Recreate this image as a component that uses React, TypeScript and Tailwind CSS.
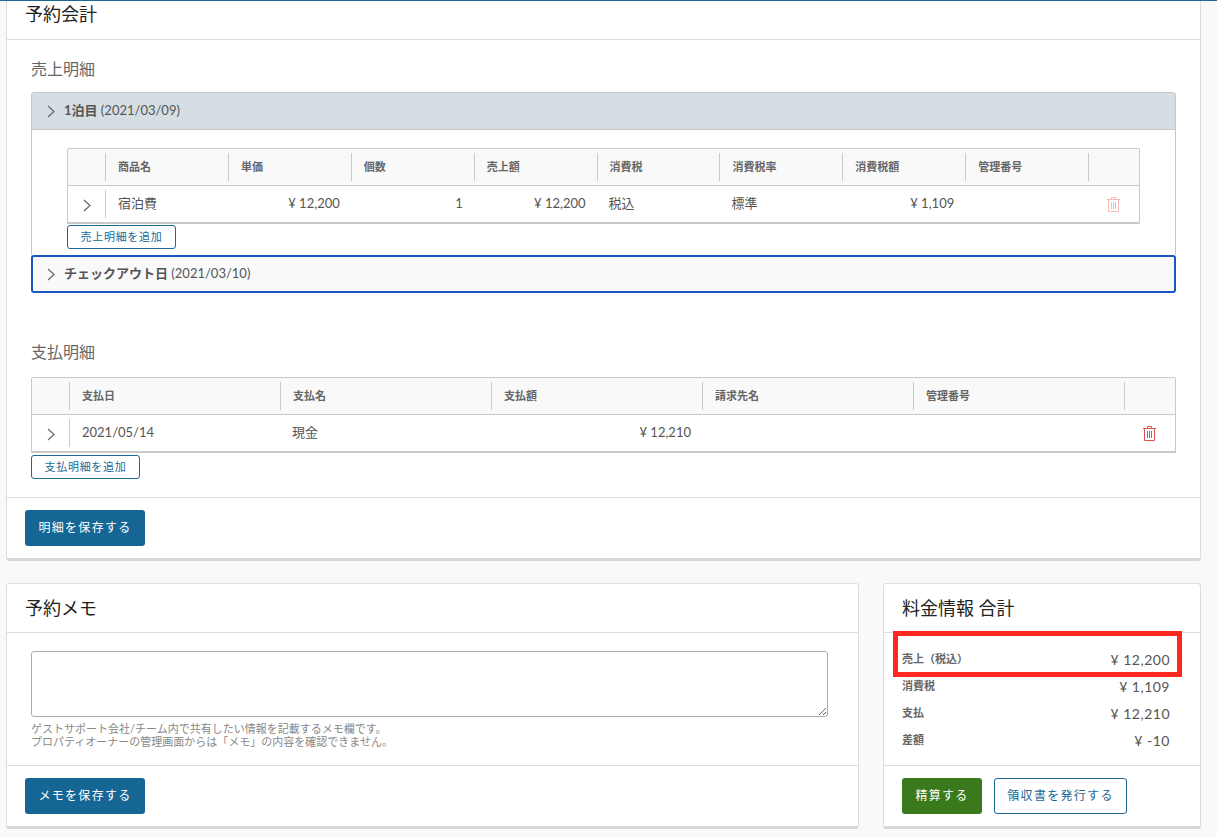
import React from 'react';

const Chevron: React.FC = () => (
  <svg width="8" height="13" viewBox="0 0 8 13" fill="none" stroke="#666" strokeWidth="1.2">
    <path d="M1 1l6 5.5L1 12" />
  </svg>
);

const Trash: React.FC<{ className?: string }> = ({ className }) => (
  <svg width="13" height="15" viewBox="0 0 13 15" fill="none" stroke="currentColor" strokeWidth="1" className={className}>
    <path d="M0 2.5h13M4.5 2.5v-2h4v2M1.5 2.5v12h10v-12M4.5 5v7M6.5 5v7M8.5 5v7" />
  </svg>
);

const HeadCell: React.FC<{ label?: string }> = ({ label }) => (
  <div className="flex items-center h-[28px] border-l border-[#c9c9c9] pl-3 text-[11px] font-bold text-[#666] self-center">{label}</div>
);

const Cell: React.FC<{ children?: React.ReactNode; right?: boolean }> = ({ children, right }) => (
  <div className={`flex items-center text-[13px] text-[#555] ${right ? 'justify-end pr-[11px]' : 'pl-3'}`}>{children}</div>
);

const OutlineBtn: React.FC<{ label: string }> = ({ label }) => (
  <button className="block w-[109px] h-[24px] rounded-[3px] border border-[#1b6a96] bg-white text-[11px] tracking-[0.7px] text-[#1b6a96]">{label}</button>
);

const SolidBtn: React.FC<{ label: string }> = ({ label }) => (
  <button className="w-[120px] h-[36px] rounded-[3px] bg-[#156695] text-[12px] tracking-[1.3px] text-white">{label}</button>
);

const salesHead = ['商品名', '単価', '個数', '売上額', '消費税', '消費税率', '消費税額', '管理番号', ''];
const payHead = ['支払日', '支払名', '支払額', '請求先名', '管理番号', ''];

const totals = [
  { label: '売上（税込）', value: '¥ 12,200' },
  { label: '消費税', value: '¥ 1,109' },
  { label: '支払', value: '¥ 12,210' },
  { label: '差額', value: '¥ -10' },
];

export default function App() {
  return (
    <div className="relative h-[837px] overflow-hidden bg-[#f9f9f9] border-t border-[#1b6a96] font-['Lato','Noto_Sans_CJK_JP',sans-serif] text-[#555]">
      <div className="mx-[6px] w-[1195px] h-[560px] bg-white border-x border-[#ddd] border-b-[3px] border-b-[#d8d8d8] rounded-b-[3px] flex flex-col">
        <div className="h-[39px] shrink-0 border-b border-[#ddd] pl-[18px] text-[18px] leading-[26px] text-[#222]">予約会計</div>

        <div className="flex-1 px-[24px] pt-[17px]">
          <h2 className="text-[16px] leading-[24px] text-[#666]">売上明細</h2>
          <div className="mt-[11px] w-[1145px] h-[163px] border-x border-[#c4c8c8] rounded-t-[3px]">
            <div className="h-[38px] flex items-center gap-[9px] pl-[15px] bg-[#d4dee3] border-y border-[#c4c8c8] rounded-t-[3px] text-[13px] text-[#555]">
              <Chevron />
              <span><b>1泊目</b> (2021/03/09)</span>
            </div>
            <div className="ml-[35px] mt-[18px] w-[1073px] border border-[#c9c9c9] border-b-2 rounded-t-[2px]">
              <div className="grid grid-cols-[37px_repeat(8,122.9px)_1fr] h-[37px] bg-[#f9f9f9] border-b border-[#c9c9c9]">
                <div />
                {salesHead.map((h, i) => (
                  <HeadCell key={i} label={h} />
                ))}
              </div>
              <div className="grid grid-cols-[37px_repeat(8,122.9px)_1fr] h-[36px]">
                <div className="flex items-center justify-center pt-[2px]"><Chevron /></div>
                <div className="flex items-center border-l border-[#c9c9c9] h-[28px] self-center pl-3 text-[13px]">宿泊費</div>
                <Cell right>¥ 12,200</Cell>
                <Cell right>1</Cell>
                <Cell right>¥ 12,200</Cell>
                <Cell>税込</Cell>
                <Cell>標準</Cell>
                <Cell right>¥ 1,109</Cell>
                <Cell />
                <div className="flex items-center justify-center">
                  <Trash className="text-[#f7b9b9]" />
                </div>
              </div>
            </div>
            <div className="ml-[35px] mt-[1px]"><OutlineBtn label="売上明細を追加" /></div>
          </div>
          <div className="w-[1145px] h-[38px] flex items-center gap-[9px] pl-[14px] bg-[#f9f9f9] border-2 border-[#1a56bf] rounded-[3px] text-[13px] text-[#555]">
            <Chevron />
            <span><b>チェックアウト日</b> (2021/03/10)</span>
          </div>

          <h2 className="mt-[47px] text-[16px] leading-[24px] text-[#666]">支払明細</h2>
          <div className="mt-[13px] w-[1145px] border border-[#c9c9c9] border-b-2 rounded-t-[2px]">
            <div className="grid grid-cols-[37px_repeat(5,211px)_1fr] h-[37px] bg-[#f9f9f9] border-b border-[#c9c9c9]">
              <div />
              {payHead.map((h, i) => (
                <HeadCell key={i} label={h} />
              ))}
            </div>
            <div className="grid grid-cols-[37px_repeat(5,211px)_1fr] h-[36px]">
              <div className="flex items-center justify-center pt-[2px]"><Chevron /></div>
              <div className="flex items-center border-l border-[#c9c9c9] h-[28px] self-center pl-3 text-[13px]">2021/05/14</div>
              <Cell>現金</Cell>
              <Cell right>¥ 12,210</Cell>
              <Cell />
              <Cell />
              <div className="flex items-center justify-center">
                <Trash className="text-[#d9534f]" />
              </div>
            </div>
          </div>
          <div className="mt-[2px]"><OutlineBtn label="支払明細を追加" /></div>
        </div>

        <div className="h-[61px] shrink-0 border-t border-[#ddd] pl-[18px] pt-[12px]">
          <SolidBtn label="明細を保存する" />
        </div>
      </div>

      <div className="mt-[22px] mx-[6px] flex gap-[24px] items-start">
        <section className="w-[853px] h-[246px] bg-white border border-[#ddd] border-b-[3px] border-b-[#d8d8d8] rounded-[3px] flex flex-col">
          <div className="h-[49px] shrink-0 flex items-center border-b border-[#ddd] pl-[18px] text-[18px] text-[#222]">予約メモ</div>
          <div className="flex-1 px-[24px] pt-[18px]">
            <textarea className="block w-[797px] h-[66px] rounded-[3px] border border-[#aaa] bg-white" />
            <p className="mt-[5px] text-[11px] leading-[13px] text-[#888]">
              ゲストサポート会社/チーム内で共有したい情報を記載するメモ欄です。
              <br />
              プロパティオーナーの管理画面からは「メモ」の内容を確認できません。
            </p>
          </div>
          <div className="h-[61px] shrink-0 border-t border-[#ddd] pl-[18px] pt-[12px]">
            <SolidBtn label="メモを保存する" />
          </div>
        </section>

        <section className="w-[318px] h-[246px] bg-white border border-[#ddd] border-b-[3px] border-b-[#d8d8d8] rounded-[3px] flex flex-col">
          <div className="h-[49px] shrink-0 flex items-center border-b border-[#ddd] pl-[18px] text-[18px] text-[#222]">料金情報 合計</div>
          <div className="flex-1 pl-[18px] pr-[30px] pt-[13px]">
            {totals.map((t) => (
              <div key={t.label} className="h-[27px] flex items-center justify-between">
                <span className="text-[11px] font-bold text-[#666]">{t.label}</span>
                <span className="text-[14px] tracking-[0.5px] text-[#555]">{t.value}</span>
              </div>
            ))}
          </div>
          <div className="h-[61px] shrink-0 border-t border-[#ddd] pl-[18px] pt-[12px] flex gap-[12px] items-start">
            <button className="w-[80px] h-[36px] rounded-[3px] bg-[#3a7a1c] text-[12px] tracking-[1.3px] text-white">精算する</button>
            <button className="w-[133px] h-[36px] rounded-[3px] border border-[#1b6a96] bg-white text-[12px] tracking-[1.3px] text-[#1b6a96]">領収書を発行する</button>
          </div>
        </section>
      </div>

      <div className="absolute left-[893px] top-[630px] w-[289px] h-[46px] border-[5px] border-[#ff2a1f]" />
    </div>
  );
}
